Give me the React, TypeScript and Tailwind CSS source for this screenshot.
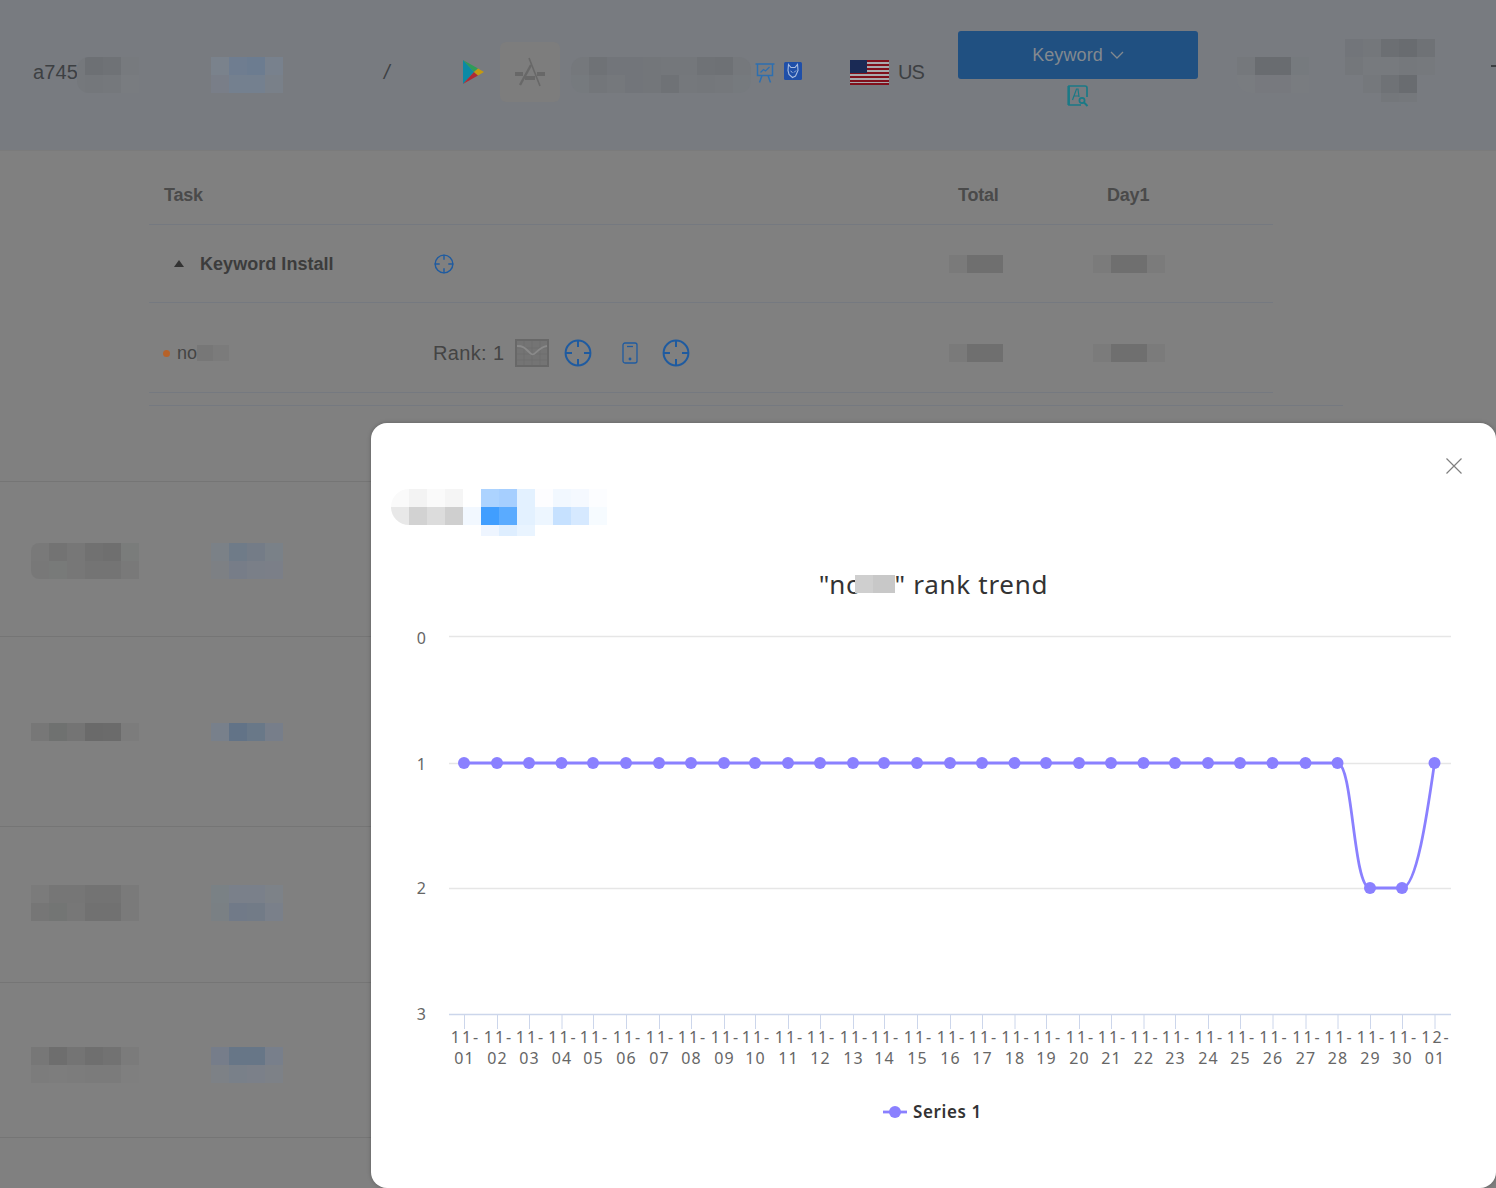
import React from "react";

type Grid = string[][];

function Mosaic({ rows, cell = 18, className = "" }: { rows: Grid; cell?: number; className?: string }) {
  return (
    <div className={"flex flex-col shrink-0 " + className}>
      {rows.map((r, i) => (
        <div key={i} className="flex">
          {r.map((c, j) => (
            <div key={j} style={{ width: cell, height: cell, backgroundColor: c }} />
          ))}
        </div>
      ))}
    </div>
  );
}

function Crosshair({ size, stroke = "#1f5ba0" }: { size: number; stroke?: string }) {
  return (
    <svg width={size} height={size} viewBox="0 0 28 28" fill="none" stroke={stroke} strokeWidth="2">
      <circle cx="14" cy="14" r="12.4" />
      <path d="M14 1v7M14 20v7M1 14h7M20 14h7" />
    </svg>
  );
}

const points = [464, 497, 529, 561.5, 593, 626, 659, 691, 724, 755, 788, 820, 853, 884, 917, 950, 982, 1014.5, 1046, 1079, 1111, 1143.5, 1175, 1208, 1240, 1272.5, 1305.5, 1337.5, 1370, 1402, 1434.5];
const dates = [
  ...Array.from({ length: 30 }, (_, i) => ["11-", String(i + 1).padStart(2, "0")]),
  ["12-", "01"],
];
const L = 371;
const T = 610;
const LINE = "#8a80ff";

function Chart() {
  const x = (v: number) => v - L;
  const y = (v: number) => v - T;
  const path =
    `M${x(464)} ${y(763)} L${x(1337.5)} ${y(763)} ` +
    `C${x(1353)} ${y(763)} ${x(1353)} ${y(888)} ${x(1370)} ${y(888)} ` +
    `L${x(1402)} ${y(888)} C${x(1417)} ${y(888)} ${x(1428)} ${y(808)} ${x(1434.5)} ${y(763)}`;
  return (
    <svg width="1125" height="520" viewBox="0 0 1125 520" className="block" style={{ fontFamily: '"Noto Sans", sans-serif' }}>
      {[636.5, 763.5, 888.5].map((g) => (
        <line key={g} x1={x(449)} x2={x(1451)} y1={y(g)} y2={y(g)} stroke="#e6e6e6" strokeWidth="1.5" />
      ))}
      <line x1={x(449)} x2={x(1451)} y1={y(1014.5)} y2={y(1014.5)} stroke="#ccd6eb" strokeWidth="1.5" />
      {["0", "1", "2", "3"].map((t, i) => (
        <text key={t} x={x(426)} y={y([644, 770, 894, 1020][i])} textAnchor="end" fontSize="16" fill="#666666">
          {t}
        </text>
      ))}
      {points.map((p, i) => (
        <g key={i}>
          <line x1={x(p + 0.5)} x2={x(p + 0.5)} y1={y(1015)} y2={y(1029)} stroke="#ccd6eb" />
          <text x={x(p + 1.5)} y={y(1043)} textAnchor="middle" fontSize="16" letterSpacing="2" fill="#666666">
            {dates[i][0]}
          </text>
          <text x={x(p + 0.5)} y={y(1064)} textAnchor="middle" fontSize="16" letterSpacing="1" fill="#666666">
            {dates[i][1]}
          </text>
        </g>
      ))}
      <path d={path} fill="none" stroke={LINE} strokeWidth="2.8" />
      {points.map((p, i) => (
        <circle key={i} cx={x(p)} cy={y(i === 28 || i === 29 ? 888 : 763)} r="6" fill={LINE} />
      ))}
      <line x1={x(883)} x2={x(907)} y1={y(1112)} y2={y(1112)} stroke={LINE} strokeWidth="2.8" />
      <circle cx={x(895)} cy={y(1112)} r="6" fill={LINE} />
      <text x={x(913)} y={y(1118)} fontSize="17" fontWeight="600" letterSpacing="0.6" fill="#333333">
        Series 1
      </text>
    </svg>
  );
}

function ListRow({ pt, h, a, b, round = "" }: { pt: number; h: number; a: Grid; b: Grid; round?: string }) {
  return (
    <div className="flex items-start border-b border-[#757575]" style={{ height: h, paddingTop: pt }}>
      <Mosaic rows={a} className={"ml-[31px] overflow-hidden " + round} />
      <Mosaic rows={b} className="ml-[72px]" />
    </div>
  );
}

export default function App() {
  return (
    <div className="relative w-[1496px] h-[1188px] overflow-hidden bg-[#808080] text-[#3c3c3c]" style={{ fontFamily: '"Liberation Sans", Arial, sans-serif' }}>
      {/* Header */}
      <div className="relative h-[151px] bg-[#787b80] border-b border-[#7b7b7b] flex items-start">
        <span className="absolute left-[33px] top-[60px] text-[20px] leading-[24px] tracking-[0.1px] text-[#3d4043]">a745</span>
        <div className="absolute left-[77px] top-[57px] flex rounded-l-[12px] overflow-hidden">
          <div className="w-[8px] h-[36px] bg-[#75787c]" />
          <Mosaic
            rows={[
              ["#6d7074", "#6f7276", "#777a7e"],
              ["#74777b", "#75787c", "#797c80"],
            ]}
          />
        </div>
        <Mosaic
          className="absolute left-[211px] top-[57px]"
          rows={[
            ["#7a828c", "#6f7d90", "#6c7c90", "#78818d"],
            ["#797e88", "#74808f", "#74808f", "#798089"],
          ]}
        />
        <span className="absolute left-[384px] top-[60px] text-[20px] leading-[24px] italic text-[#3d4043]">/</span>
        <svg className="absolute left-[463px] top-[60px]" width="21" height="24" viewBox="0 0 21 24">
          <path d="M0 0 L11 12 L0 24Z" fill="#0b8aa5" />
          <path d="M0 0 L15 8.5 L11 12Z" fill="#2f9c58" />
          <path d="M0 24 L15 15.5 L11 12Z" fill="#b02a34" />
          <path d="M15 8.5 L21 12 L15 15.5 L11 12Z" fill="#c49a10" />
        </svg>
        <div className="absolute left-[500px] top-[42px] w-[60px] h-[60px] rounded-[6px] bg-[#7d7d7d] flex items-center justify-center">
          <svg width="32" height="32" viewBox="0 0 32 32" fill="none" stroke="#686868">
            <path d="M15 2 L26 30" strokeWidth="1.6" />
            <path d="M17 9 L6 29" strokeWidth="2.4" />
            <path d="M1 18h8M23 18h8M11 22h10" strokeWidth="4" />
          </svg>
        </div>
        <Mosaic
          className="absolute left-[571px] top-[57px] rounded-[12px] overflow-hidden"
          rows={[
            ["#75787c", "#6f7276", "#72757a", "#72757a", "#73767a", "#74777b", "#74777b", "#6f7276", "#6e7175", "#75787c"],
            ["#767a7e", "#73767a", "#75787c", "#72757a", "#73767a", "#6f7276", "#75787c", "#74777b", "#75787c", "#767a7e"],
          ]}
        />
        <svg className="absolute left-[755px] top-[63px]" width="20" height="20" viewBox="0 0 20 20" fill="none" stroke="#2d6fb0" strokeWidth="1.5">
          <path d="M0.5 1h19M2.5 1v11.5h15V1M7 12.5l-2.5 7M13 12.5l2.5 7" />
          <path d="M5.5 9.5l3-3 2 1.5 4-4" strokeWidth="1.2" />
        </svg>
        <svg className="absolute left-[784px] top-[62px]" width="18" height="18" viewBox="0 0 18 18">
          <rect width="18" height="18" rx="1.5" fill="#1f4fa8" />
          <path d="M4.5 2.5l2.5 3h4l2.5-3 .5 6-2.5 5.5-3 1.5-3.5-3-1-4z" fill="none" stroke="#a9bde0" strokeWidth="1.1" />
          <path d="M6.5 9l2 1.5M12 8.5l-2 2" stroke="#a9bde0" strokeWidth="1" />
        </svg>
        <svg className="absolute left-[850px] top-[60px]" width="39" height="25" viewBox="0 0 39 25">
          <rect width="39" height="25" fill="#a8aaae" />
          {[0, 4, 8, 12, 16, 20].map((s) => (
            <rect key={s} y={s} width="39" height="2" fill="#80101c" />
          ))}
          <rect y="23" width="39" height="2" fill="#80101c" />
          <rect width="17" height="13" fill="#1a2a55" />
        </svg>
        <span className="absolute left-[898px] top-[60px] text-[20px] leading-[24px] tracking-[-0.9px] text-[#3d4043]">US</span>
        <div className="absolute left-[958px] top-[31px] w-[240px] h-[48px] pt-[1px] rounded-[3px] bg-[#205081] flex items-center justify-center gap-[7px] text-[#83898f] text-[18px]">
          <span className="tracking-[0.1px]">Keyword</span>
          <svg width="14" height="9" viewBox="0 0 14 9" fill="none" stroke="#83898f" strokeWidth="1.3">
            <path d="M1 1l6 6 6-6" />
          </svg>
        </div>
        <svg className="absolute left-[1067px] top-[85px]" width="23" height="22" viewBox="0 0 23 22" fill="none" stroke="#1a7a86" strokeWidth="1.7">
          <path d="M20 12V3a2 2 0 0 0-2-2H2v19h12" />
          <path d="M1.5 1v19" strokeWidth="2.2" />
          <path d="M5.5 15l4-11h1.5l1 8M7 11h5" strokeWidth="1.2" />
          <circle cx="15" cy="15.5" r="2.6" />
          <path d="M17 17.5l3.5 3.5" strokeWidth="2" />
        </svg>
        <Mosaic
          className="absolute left-[1237px] top-[57px] rounded-bl-[14px] overflow-hidden"
          rows={[
            ["#75787c", "#696c70", "#696c70", "#767a7e"],
            ["#797c80", "#77797e", "#77797e", "#797c80"],
          ]}
        />
        <Mosaic
          className="absolute left-[1345px] top-[39px]"
          rows={[
            ["#72757a", "#74777b", "#6c6f73", "#696c70", "#6f7276"],
            ["#74777b", "#777a7e", "#777a7e", "#75787c", "#76797d"],
          ]}
        />
        <Mosaic className="absolute left-[1363px] top-[75px]" rows={[["#75787c", "#6f7276", "#696c70"]]} />
        <Mosaic className="absolute left-[1381px] top-[93px]" cell={9} rows={[["#74777b", "#74777b", "#75787c", "#75787c"]]} />
        <div className="absolute left-[1491px] top-[65px] w-[5px] h-[2px] bg-[#3d4043]" />
      </div>

      {/* Task table */}
      <div className="ml-[149px] w-[1124px] text-[#3c3c3c]">
        <div className="flex items-center h-[74px] pt-[16px] border-b border-[#757980] font-bold text-[18px] text-[#4a4a4a] tracking-[-0.2px]">
          <span className="ml-[15px] w-[794px]">Task</span>
          <span className="w-[149px]">Total</span>
          <span>Day1</span>
        </div>
        <div className="flex items-center h-[78px] border-b border-[#757980]">
          <div className="ml-[25px] w-0 h-0 border-l-[5.5px] border-r-[5.5px] border-b-[7px] border-l-transparent border-r-transparent border-b-[#333333]" />
          <span className="ml-[16px] w-[234px] font-bold text-[18px] leading-[24px] tracking-[0.04px]">Keyword Install</span>
          <Crosshair size={20} />
          <Mosaic className="ml-[495px]" rows={[["#7a7a7a", "#6f6f6f", "#6f6f6f"]]} />
          <Mosaic className="ml-[90px]" rows={[["#7b7b7b", "#6f6f6f", "#6f6f6f", "#7b7b7b"]]} />
        </div>
        <div className="flex items-center h-[90px] pt-[11px] border-b border-[#757980]">
          <div className="ml-[14px] w-[7px] h-[7px] rounded-full bg-[#b5622a]" />
          <span className="ml-[7px] text-[18px] text-[#444444]">no</span>
          <Mosaic rows={[["#777777", "#7b7b7b"]]} cell={16} />
          <span className="ml-[204px] text-[20px] text-[#444444] tracking-[0.35px]">Rank: 1</span>
          <svg className="ml-[11px]" width="34" height="28" viewBox="0 0 34 28" fill="none">
            <rect x="1" y="1" width="32" height="26" fill="#747474" stroke="#686868" strokeWidth="2" />
            <path d="M2 9h30M2 15h30M2 21h30M9 2v24M17 2v24M25 2v24" stroke="#6f6f6f" strokeWidth="0.7" />
            <path d="M2 7c6 0 8 2 11 5s4 4 6 3 6-7 13-8" stroke="#8a8a8a" strokeWidth="1.8" />
          </svg>
          <div className="ml-[15px]"><Crosshair size={28} /></div>
          <svg className="ml-[30px]" width="16" height="22" viewBox="0 0 16 22" fill="none" stroke="#1f5ba0" strokeWidth="1.3">
            <rect x="1" y="1" width="14" height="20" rx="2" />
            <path d="M5 4.5h6" />
            <circle cx="8" cy="17" r="0.8" fill="#1f5ba0" />
          </svg>
          <div className="ml-[24px]"><Crosshair size={28} /></div>
          <Mosaic className="ml-[259px]" rows={[["#7a7a7a", "#6f6f6f", "#6f6f6f"]]} />
          <Mosaic className="ml-[90px]" rows={[["#7b7b7b", "#6f6f6f", "#6f6f6f", "#7b7b7b"]]} />
        </div>
      </div>
      <div className="ml-[149px] w-[1194px] h-[13px] border-b border-[#757980]" />

      {/* Rows behind the dialog */}
      <div className="h-[76px] border-b border-[#757575]" />
      <ListRow
        pt={61}
        h={155}
        round="rounded-l-[8px]"
        a={[
          ["#797979", "#737373", "#777777", "#717171", "#6f6f6f", "#7a7c7b"],
          ["#787878", "#787a79", "#777777", "#747474", "#747474", "#797979"],
        ]}
        b={[
          ["#7b8187", "#6f7b88", "#747c87", "#7a8188"],
          ["#7d8084", "#777d88", "#7a7f88", "#7b7f88"],
        ]}
      />
      <ListRow
        pt={86}
        h={190}
        a={[["#777777", "#6f7170", "#747474", "#6a6a6a", "#6b6b6b", "#7c7c7c"]]}
        b={[["#78808b", "#627387", "#697888", "#777e8a"]]}
      />
      <ListRow
        pt={58}
        h={156}
        a={[
          ["#7b7b7b", "#767676", "#767676", "#737373", "#737373", "#7a7a7a"],
          ["#767676", "#737574", "#777777", "#717171", "#717171", "#7a7a7a"],
        ]}
        b={[
          ["#7a8185", "#7a808a", "#7a808a", "#7d8288"],
          ["#7a8084", "#717a88", "#727b87", "#7a808a"],
        ]}
      />
      <ListRow
        pt={64}
        h={155}
        a={[
          ["#777777", "#6e6e6e", "#747474", "#6f6f6f", "#727272", "#7b7b7b"],
          ["#7c7c7c", "#7d7d7d", "#7c7c7c", "#7b7b7b", "#7b7b7b", "#7f7f7f"],
        ]}
        b={[
          ["#767d8a", "#677687", "#677687", "#787f8b"],
          ["#7d8186", "#798089", "#7b8089", "#7d8187"],
        ]}
      />

      {/* Dialog */}
      <div className="absolute left-[371px] top-[423px] w-[1125px] h-[765px] rounded-[16px] bg-white overflow-hidden shadow-[0_0_4px_rgba(0,0,0,0.25)]">
        <svg className="absolute right-[34px] top-[35px]" width="16" height="16" viewBox="0 0 16 16" fill="none" stroke="#7f7f7f" strokeWidth="1.2">
          <path d="M0.5 0.5l15 15M15.5 0.5l-15 15" />
        </svg>
        <div className="pt-[66px] pl-[20px]">
          <div className="h-[47px]">
            <Mosaic
              className="w-max rounded-l-[18px] overflow-hidden"
              rows={[
                ["#fafafa", "#f3f3f3", "#fafafa", "#f5f5f5", "#ffffff", "#acd3ff", "#a6cfff", "#e3f1ff", "#fdfdff", "#f2f8ff", "#f5f9ff", "#fcfdff"],
                ["#e8e8e8", "#d2d2d2", "#dcdcdc", "#cfcfcf", "#f2f8ff", "#409eff", "#5aabff", "#e3f1ff", "#edf6ff", "#c6e1ff", "#d6e9ff", "#f6fbff"],
              ]}
            />
            <div className="flex h-[11px] ml-[90px]">
              <div className="w-[18px] bg-[#eef5ff]" />
              <div className="w-[18px] bg-[#deeeff]" />
              <div className="w-[18px] bg-[#e9f4ff]" />
            </div>
          </div>
        </div>
        <div className="mt-[30px] h-[44px] flex items-start justify-center text-[26px] leading-[36px] text-[#333333] tracking-[0.7px]" style={{ fontFamily: '"Noto Sans", sans-serif' }}>
          <span>"no</span>
          <div className="flex mt-[9px] -ml-[8px]">
            <div className="w-[18px] h-[18px] bg-[#cfcfcf]" />
            <div className="w-[22px] h-[18px] bg-[#c8c8c8]" />
          </div>
          <span>" rank trend</span>
        </div>
        <Chart />
      </div>
    </div>
  );
}
